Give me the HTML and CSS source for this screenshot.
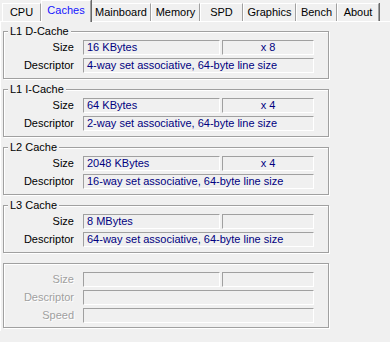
FILE: index.html
```html
<!DOCTYPE html>
<html lang="en">
<head>
    <meta charset="UTF-8">
    <title>CPU-Z Caches</title>
    <link rel="stylesheet" href="styles.css">
</head>
<body>
    <div class="tabs">
        <div class="tab w-cpu">CPU</div>
        <div class="tab tab_active w-caches">Caches</div>
        <div class="tab w-mainboard">Mainboard</div>
        <div class="tab w-memory">Memory</div>
        <div class="tab w-spd">SPD</div>
        <div class="tab w-graphics">Graphics</div>
        <div class="tab w-bench">Bench</div>
        <div class="tab w-about">About</div>
    </div>

    <div class="page">
        <div class="group">
            <span class="group_title">L1 D-Cache</span>
            <div class="row">
                <span class="lbl">Size</span>
                <span class="field f-size">16 KBytes</span>
                <span class="field f-ways">x 8</span>
            </div>
            <div class="row">
                <span class="lbl">Descriptor</span>
                <span class="field f-wide">4-way set associative, 64-byte line size</span>
            </div>
        </div>

        <div class="group">
            <span class="group_title">L1 I-Cache</span>
            <div class="row">
                <span class="lbl">Size</span>
                <span class="field f-size">64 KBytes</span>
                <span class="field f-ways">x 4</span>
            </div>
            <div class="row">
                <span class="lbl">Descriptor</span>
                <span class="field f-wide">2-way set associative, 64-byte line size</span>
            </div>
        </div>

        <div class="group">
            <span class="group_title">L2 Cache</span>
            <div class="row">
                <span class="lbl">Size</span>
                <span class="field f-size">2048 KBytes</span>
                <span class="field f-ways">x 4</span>
            </div>
            <div class="row">
                <span class="lbl">Descriptor</span>
                <span class="field f-wide">16-way set associative, 64-byte line size</span>
            </div>
        </div>

        <div class="group">
            <span class="group_title">L3 Cache</span>
            <div class="row">
                <span class="lbl">Size</span>
                <span class="field f-size">8 MBytes</span>
                <span class="field f-ways"></span>
            </div>
            <div class="row">
                <span class="lbl">Descriptor</span>
                <span class="field f-wide">64-way set associative, 64-byte line size</span>
            </div>
        </div>

        <!-- unused cache level, greyed out -->
        <div class="group group_empty">
            <div class="row">
                <span class="lbl disabled">Size</span>
                <span class="field f-size"></span>
                <span class="field f-ways"></span>
            </div>
            <div class="row">
                <span class="lbl disabled">Descriptor</span>
                <span class="field f-wide"></span>
            </div>
            <div class="row">
                <span class="lbl disabled">Speed</span>
                <span class="field f-wide"></span>
            </div>
        </div>
    </div>
</body>
</html>
```

FILE: styles.css
```css
body {
    margin: 0;
    background-color: #f0f0f0;
    color: #000;
    font-family: "Liberation Sans", Arial, sans-serif;
    font-size: 11px;
    line-height: 13px;
}
.tabs {
    display: flex;
    align-items: flex-end;
    height: 21px;
    padding-left: 2px;
}
.tab {
    box-sizing: border-box;
    height: 18px;
    padding-top: 2px;
    text-align: center;
    border-top: 1px solid #fff;
    border-left: 1px solid #fff;
    border-right: 1px solid #a0a0a0;
    box-shadow: 1px 0 0 #696969;
}
.tab_active {
    position: relative;
    height: 22px;
    margin-bottom: -1px;
    padding-top: 3px;
    color: #1515ff;
    background-color: #f0f0f0;
    z-index: 1;
}
.w-cpu { width: 39px; }
.w-caches { width: 50px; }
.w-mainboard { width: 60px; }
.w-memory { width: 49px; }
.w-spd { width: 43px; }
.w-graphics { width: 53px; }
.w-bench { width: 41px; }
.w-about { width: 42px; }

.page {
    border-top: 1px solid #fff;
    border-left: 1px solid #fff;
    padding: 9px 0 0 2px;
    height: 310px;
    box-sizing: border-box;
}
.group {
    box-sizing: border-box;
    width: 326px;
    height: 48px;
    margin-bottom: 10px;
    padding: 0 14px 0 0;
    border: 1px solid #a0a0a0;
    box-shadow: inset 1px 1px 0 #fff, 1px 1px 0 #fff;
}
.group_empty {
    height: 65px;
    padding-top: 8px;
}
.group_title {
    display: block;
    width: fit-content;
    margin: -7px 0 2px 4px;
    padding: 0 2px;
    background-color: #f0f0f0;
}
.row {
    display: flex;
    align-items: center;
    gap: 2px;
    margin-bottom: 3px;
}
.lbl {
    width: 70px;
    margin-right: 7px;
    text-align: right;
}
.lbl.disabled {
    color: #a0a0a0;
    text-shadow: 1px 1px 0 #fff;
}
.field {
    box-sizing: border-box;
    height: 15px;
    padding: 0 3px;
    color: #000080;
    white-space: nowrap;
    border-top: 1px solid #a0a0a0;
    border-left: 1px solid #a0a0a0;
    border-bottom: 1px solid #fff;
    border-right: 1px solid #fff;
}
.f-size { width: 137px; }
.f-ways { width: 92px; text-align: center; }
.f-wide { width: 231px; }
```
